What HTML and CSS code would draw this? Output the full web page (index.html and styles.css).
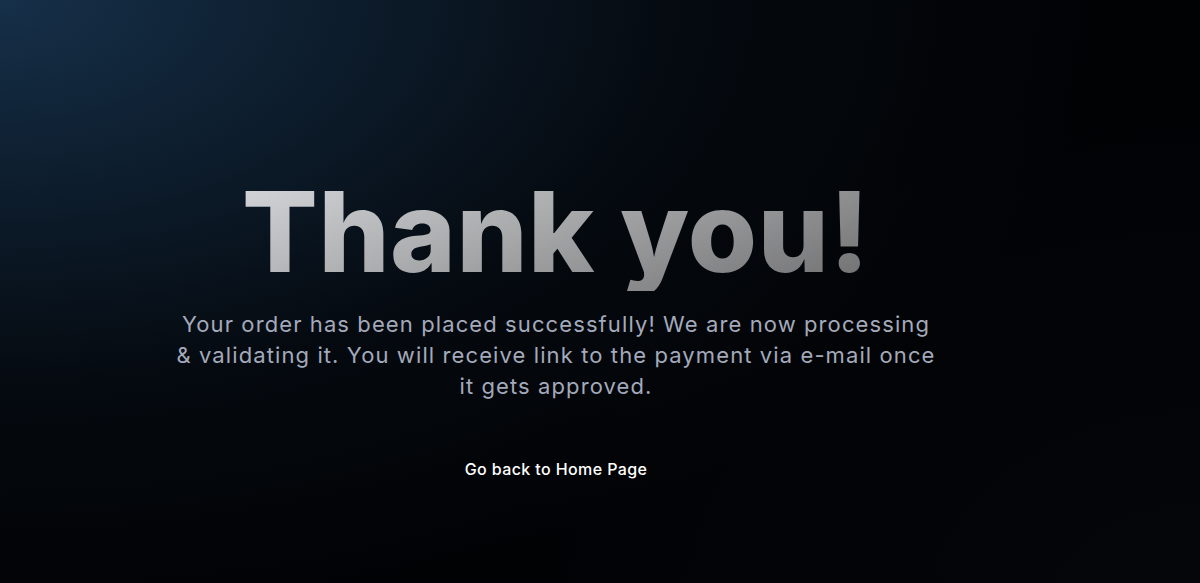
FILE: index.html
```html
<!DOCTYPE html>
<html lang="en">
<head>
<meta charset="utf-8">
<title>Thank you</title>
<link rel="stylesheet" href="styles.css">
</head>
<body>
<main class="page">
  <section class="content">
    <h1 class="title">Thank you!</h1>
    <p class="message">Your order has been placed successfully! We are now processing<br>&amp; validating it. You will receive link to the payment via e-mail once<br>it gets approved.</p>
    <a class="home-link" href="#">Go back to Home Page</a>
  </section>
</main>
</body>
</html>
```
FILE: styles.css
```css
html, body {
  margin: 0;
  padding: 0;
  height: 100%;
}
body {
  background: #000;
  font-family: "Inter", "Liberation Sans", sans-serif;
}
.page {
  height: 583px;
  box-sizing: border-box;
  background:
    radial-gradient(ellipse 1000px 760px at 1200px 620px, rgba(18,22,30,0.22), rgba(0,0,0,0) 70%),
    radial-gradient(ellipse 1100px 620px at 0px 0px, #163049 0%, #0d1d2d 30%, #050a10 62%, #010204 100%);
  display: flex;
  justify-content: center;
  padding-right: 88px;
}
.content {
  display: flex;
  flex-direction: column;
  align-items: center;
  padding-top: 171px;
}
.title {
  margin: 0;
  font-size: 112px;
  font-weight: 800;
  line-height: 120px;
  letter-spacing: 0.5px;
  background: linear-gradient(160deg, #d6d8db 0%, #a9aaac 45%, #6e6e70 100%);
  -webkit-background-clip: text;
  background-clip: text;
  color: transparent;
}
.message {
  margin: 18px 0 0;
  font-size: 22px;
  line-height: 31px;
  letter-spacing: 1.1px;
  color: #a3aabb;
  text-align: center;
}
.home-link {
  margin-top: 57px;
  font-size: 16px;
  font-weight: 500;
  letter-spacing: 0.4px;
  color: #ffffff;
  text-decoration: none;
}
```
